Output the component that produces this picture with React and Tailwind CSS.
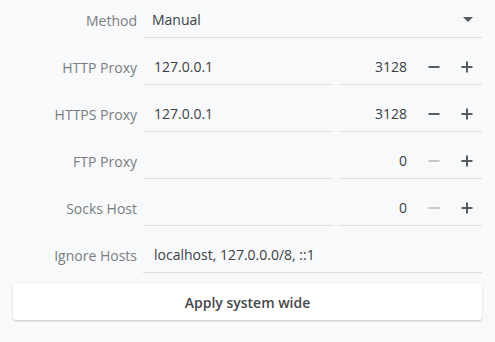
import React, { useState } from 'react';

const rows = [
  { label: 'HTTP Proxy', host: '127.0.0.1', port: 3128 },
  { label: 'HTTPS Proxy', host: '127.0.0.1', port: 3128 },
  { label: 'FTP Proxy', host: '', port: 0 },
  { label: 'Socks Host', host: '', port: 0 },
];

function Minus({ off }) {
  return (
    <svg width="12" height="12" viewBox="0 0 12 12" className={off ? 'text-[#c4c6c8]' : 'text-[#555d61]'}>
      <rect x="0.5" y="5" width="11" height="2" fill="currentColor" />
    </svg>
  );
}

function Plus() {
  return (
    <svg width="12" height="12" viewBox="0 0 12 12" className="text-[#555d61]">
      <rect x="0.5" y="5" width="11" height="2" fill="currentColor" />
      <rect x="5" y="0.5" width="2" height="11" fill="currentColor" />
    </svg>
  );
}

export default function App() {
  const [data, setData] = useState(rows);

  const bump = (i, d) =>
    setData((prev) => prev.map((r, j) => (j === i ? { ...r, port: Math.max(0, r.port + d) } : r)));

  return (
    <div className="w-[495px] h-[342px] bg-[#f8f9fb] pt-[2px] font-['Open_Sans',sans-serif] text-[14px] overflow-hidden">
      <div className="flex flex-col gap-[11px]">
        {/* Method */}
        <div className="flex h-[36px]">
          <div className="w-[137px] flex items-center justify-end text-[#7a7d80]">Method</div>
          <div className="ml-[6px] w-[339px] flex items-center justify-between border-b border-[#dcdee1] pl-[9px] pr-[9px] text-[#3c4043]">
            <span>Manual</span>
            <svg width="10" height="6" viewBox="0 0 10 6" className="text-[#555d61]">
              <path d="M0 0 L10 0 L5 5 Z" fill="currentColor" />
            </svg>
          </div>
        </div>

        {data.map((r, i) => (
          <div key={r.label} className="flex h-[36px]">
            <div className="w-[137px] flex items-center justify-end text-[#7a7d80]">{r.label}</div>
            <div className="ml-[6px] w-[190px] flex items-center border-b border-[#dcdee1] pl-[11px] text-[#3c4043]">
              {r.host}
            </div>
            <div className="ml-[6px] w-[143px] flex items-center border-b border-[#dcdee1] text-[#3c4043]">
              <span className="w-[68px] text-right">{r.port}</span>
              <button onClick={() => bump(i, -1)} className="ml-[18px] w-[18px] flex justify-center">
                <Minus off={r.port === 0} />
              </button>
              <button onClick={() => bump(i, 1)} className="ml-[15px] w-[18px] flex justify-center">
                <Plus />
              </button>
            </div>
          </div>
        ))}

        {/* Ignore hosts */}
        <div className="flex h-[36px]">
          <div className="w-[137px] flex items-center justify-end text-[#7a7d80]">Ignore Hosts</div>
          <div className="ml-[6px] w-[339px] flex items-center border-b border-[#dcdee1] pl-[11px] text-[#3c4043]">
            localhost, 127.0.0.0/8, ::1
          </div>
        </div>

        <div className="px-[13px]">
          <button className="w-[469px] h-[36px] bg-white rounded-[3px] shadow-[0_1px_2px_rgba(0,0,0,0.22)] text-[#45494c] font-semibold">
            Apply system wide
          </button>
        </div>
      </div>
    </div>
  );
}
